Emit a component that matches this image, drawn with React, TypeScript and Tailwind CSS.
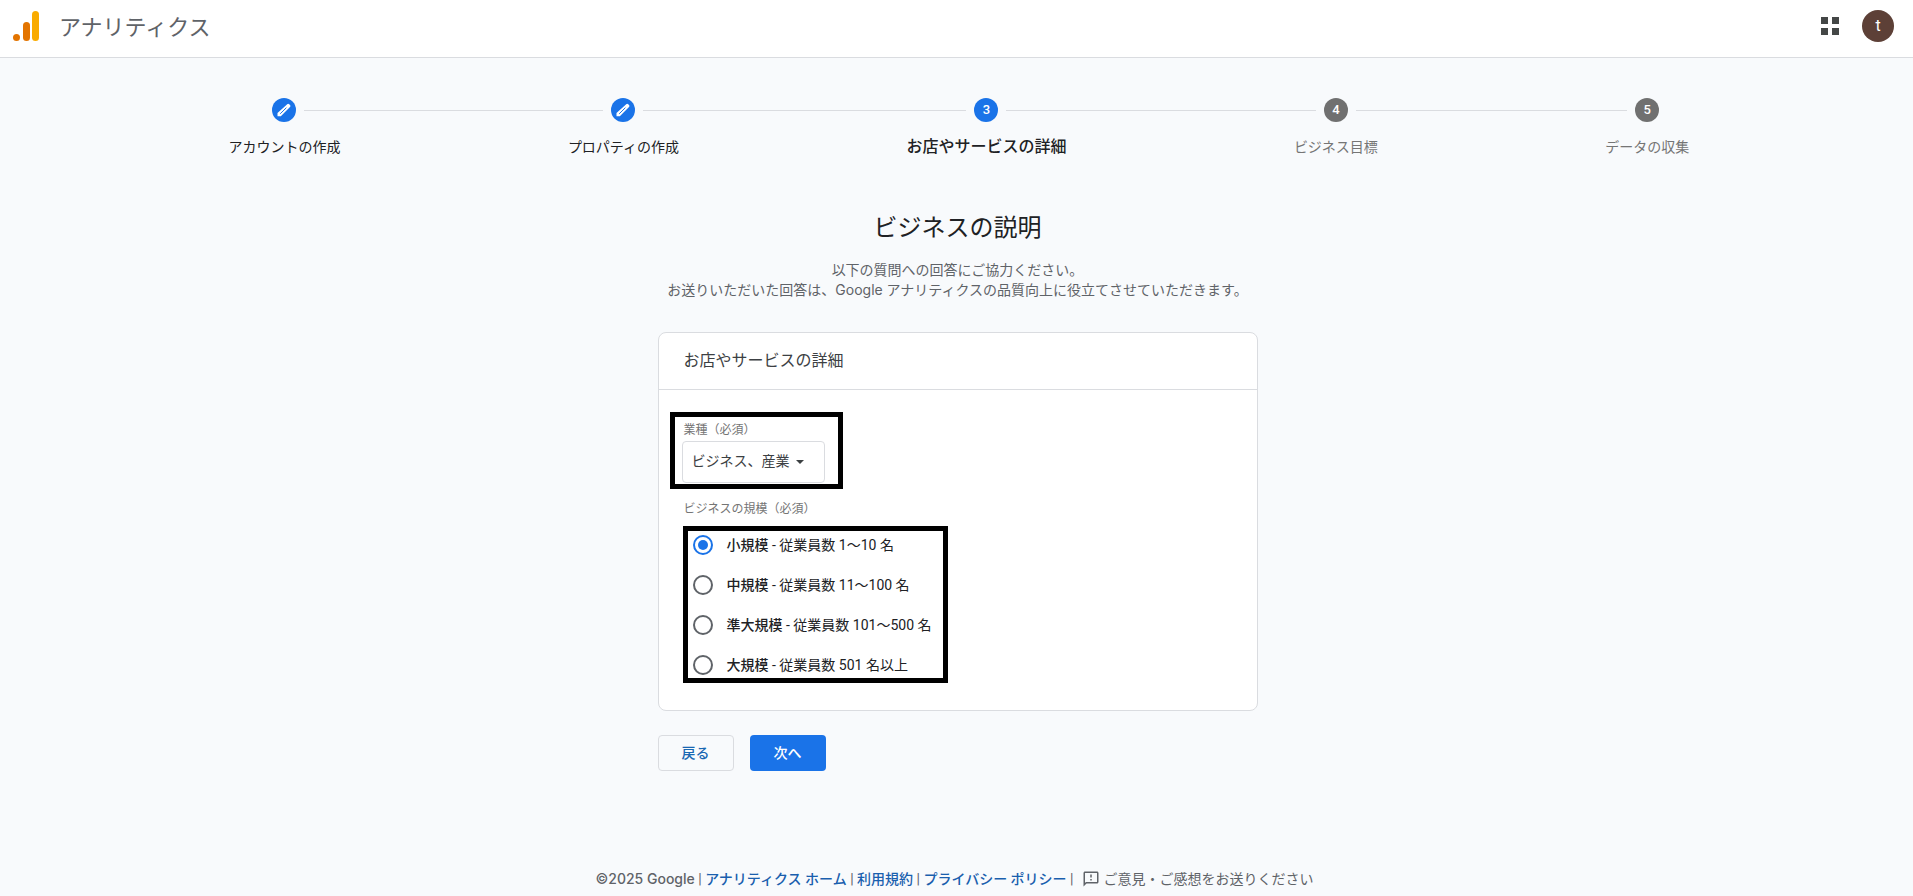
import { useState } from 'react'
import { MdOutlineFeedback } from 'react-icons/md'

const STEPS = [
  { id: 1, label: 'アカウントの作成', state: 'done' },
  { id: 2, label: 'プロパティの作成', state: 'done' },
  { id: 3, label: 'お店やサービスの詳細', state: 'current' },
  { id: 4, label: 'ビジネス目標', state: 'todo' },
  { id: 5, label: 'データの収集', state: 'todo' },
]

const LABEL_STYLES: Record<string, string> = {
  done: 'text-sm text-[#202124]',
  current: 'text-base font-medium text-[#202124]',
  todo: 'text-sm text-[#757575]',
}

const SIZES = [
  { value: 'small', name: '小規模', desc: '従業員数 1〜10 名' },
  { value: 'medium', name: '中規模', desc: '従業員数 11〜100 名' },
  { value: 'large', name: '準大規模', desc: '従業員数 101〜500 名' },
  { value: 'xlarge', name: '大規模', desc: '従業員数 501 名以上' },
]

function Logo() {
  return (
    <svg width="28" height="30" viewBox="0 0 28 30" aria-hidden="true">
      <rect x="19" y="0" width="7" height="30" rx="3.5" fill="#f9ab00" />
      <rect x="10" y="11" width="7" height="19" rx="3.5" fill="#e37400" />
      <circle cx="3.5" cy="26.5" r="3.5" fill="#e37400" />
    </svg>
  )
}

function AppsIcon() {
  return (
    <svg width="18" height="18" viewBox="0 0 18 18" fill="#444746" aria-hidden="true">
      <path d="M0 0h7v7H0zM11 0h7v7h-7zM0 11h7v7H0zM11 11h7v7h-7z" />
    </svg>
  )
}

function PencilIcon() {
  return (
    <svg width="24" height="24" viewBox="0 0 24 24" fill="none" aria-hidden="true">
      <path
        d="M5.5 18.3v-3.2L15.2 6.2a1.4 1.4 0 0 1 2 0l.8.8a1.4 1.4 0 0 1 0 2L8.8 18.3z"
        fill="#fff"
      />
      <path d="M8.2 15.8l6.2-6.1" stroke="#1a73e8" strokeWidth="1" />
    </svg>
  )
}

function Stepper() {
  return (
    <ol className="flex pt-10 pr-[5.75%] pl-[6%]">
      {STEPS.map((step, idx) => (
        <li key={step.id} className="flex flex-auto flex-col items-center">
          <div className="flex w-full items-center gap-2">
            <span className={idx === 0 ? 'h-px flex-1' : 'h-px flex-1 bg-[#dadce0]'} />
            <span
              className={
                step.state === 'todo'
                  ? 'flex size-6 items-center justify-center rounded-full bg-[#707070] text-[13px] font-medium text-white'
                  : 'flex size-6 items-center justify-center rounded-full bg-[#1a73e8] text-[13px] font-medium text-white'
              }
            >
              {step.state === 'done' ? <PencilIcon /> : step.id}
            </span>
            <span className={idx === STEPS.length - 1 ? 'h-px flex-1' : 'h-px flex-1 bg-[#dadce0]'} />
          </div>
          <span className={`mt-[13px] flex h-6 items-center whitespace-nowrap ${LABEL_STYLES[step.state]}`}>{step.label}</span>
        </li>
      ))}
    </ol>
  )
}

export default function App() {
  const [size, setSize] = useState('small')

  return (
    <div className="flex min-h-screen flex-col bg-[#f8fafc] font-[Roboto,'Noto_Sans_CJK_JP',sans-serif] text-[#202124]">
      <header className="flex h-[58px] items-center justify-between border-b border-[#dadce0] bg-white pr-[19px] pl-[13px] pb-[5px]">
        <div className="flex items-center gap-[18px]">
          <Logo />
          <span className="pt-1 text-[22px] leading-8 text-[#5f6368]">アナリティクス</span>
        </div>
        <div className="flex items-center gap-[23px]">
          <button type="button" aria-label="アプリ">
            <AppsIcon />
          </button>
          <button type="button" className="size-8 rounded-full bg-[#5d4037] text-base text-white">
            t
          </button>
        </div>
      </header>

      <Stepper />

      <main className="mx-auto w-full max-w-[602px] flex-1 pl-0.5">
        <h1 className="mt-[53px] text-center text-2xl leading-8">ビジネスの説明</h1>
        <p className="mt-4 text-center font-[Inter,'Noto_Sans_CJK_JP',sans-serif] text-sm leading-5 text-[#5f6368]">
          以下の質問への回答にご協力ください。
          <br />
          お送りいただいた回答は、Google アナリティクスの品質向上に役立てさせていただきます。
        </p>

        <section className="mt-8 rounded-lg border border-[#dadce0] bg-white">
          <h2 className="border-b border-[#dadce0] px-[25px] py-4 text-base leading-6 text-[#3c4043]">
            お店やサービスの詳細
          </h2>
          <div className="px-[11px] pt-[22px] pb-[27px]">
            {/* Industry */}
            <div className="w-fit border-5 border-black pt-[5px] pr-[13px] pb-px pl-[7px]">
              <label htmlFor="industry" className="block pl-0.5 text-xs leading-4 text-[#757575]">
                業種（必須）
              </label>
              <div className="relative mt-[3px]">
                <select
                  id="industry"
                  className="block h-[42px] w-[143px] appearance-none rounded border border-[#dadce0] bg-white pb-0.5 pl-[9px] text-sm text-[#3c4043]"
                >
                  <option>ビジネス、産業</option>
                </select>
                <svg
                  className="pointer-events-none absolute top-[19px] right-[21px]"
                  width="8"
                  height="4"
                  viewBox="0 0 8 4"
                  aria-hidden="true"
                >
                  <path d="M0 0h8L4 4z" fill="#3c4043" />
                </svg>
              </div>
            </div>

            {/* Business size */}
            <fieldset className="mt-3">
              <legend className="pb-[9px] pl-[14px] text-xs leading-4 text-[#757575]">ビジネスの規模（必須）</legend>
              <div className="ml-[13px] flex w-fit flex-col gap-5 border-5 border-black pt-1 pr-3 pb-[3px] pl-[5px]">
                {SIZES.map((s) => (
                  <label key={s.value} className="flex h-5 items-center gap-[14px] text-sm">
                    <input
                      type="radio"
                      name="size"
                      value={s.value}
                      checked={size === s.value}
                      onChange={() => setSize(s.value)}
                      className="size-5 appearance-none rounded-full border-2 border-[#5f6368] bg-clip-content p-[3px] checked:border-[#1a73e8] checked:bg-[#1a73e8]"
                    />
                    <span>
                      <span className="font-medium">{s.name}</span> - {s.desc}
                    </span>
                  </label>
                ))}
              </div>
            </fieldset>
          </div>
        </section>

        <div className="mt-6 flex gap-4 text-sm font-medium">
          <button type="button" className="h-9 rounded border border-[#dadce0] px-[23px] text-[#1967b2]">
            戻る
          </button>
          <button type="button" className="h-9 rounded bg-[#1a73e8] px-6 text-white">
            次へ
          </button>
        </div>
      </main>

      <footer className="flex items-center justify-center pr-1 pb-[7px] text-sm leading-5 text-[#5f6368]">
        <p>
          <span className="font-[Inter,sans-serif] font-medium">©2025 Google</span> |{' '}
          <a href="#home" className="font-medium text-[#1a5fae]">アナリティクス ホーム</a> |{' '}
          <a href="#terms" className="font-medium text-[#1a5fae]">利用規約</a> |{' '}
          <a href="#privacy" className="font-medium text-[#1a5fae]">プライバシー ポリシー</a> |
        </p>
        <button type="button" className="ml-2 flex items-center gap-1">
          <MdOutlineFeedback size={18} />
          ご意見・ご感想をお送りください
        </button>
      </footer>
    </div>
  )
}
